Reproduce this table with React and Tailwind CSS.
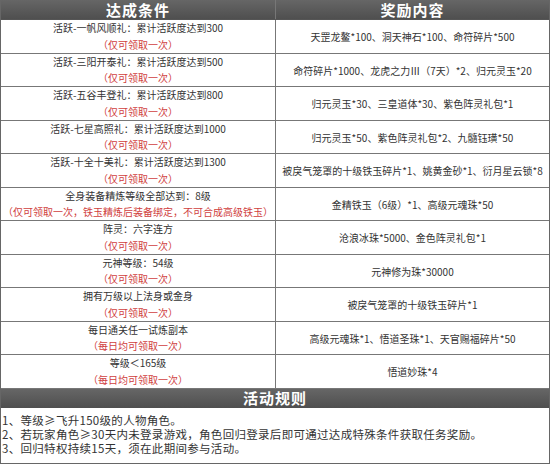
import React from 'react'

const rows = [
  { cond: '活跃-一帆风顺礼：累计活跃度达到300', note: '（仅可领取一次）', reward: '天罡龙鳌*100、洞天神石*100、命符碎片*500' },
  { cond: '活跃-三阳开泰礼：累计活跃度达到500', note: '（仅可领取一次）', reward: '命符碎片*1000、龙虎之力Ⅲ（7天）*2、归元灵玉*20' },
  { cond: '活跃-五谷丰登礼：累计活跃度达到800', note: '（仅可领取一次）', reward: '归元灵玉*30、三皇道体*30、紫色阵灵礼包*1' },
  { cond: '活跃-七星高照礼：累计活跃度达到1000', note: '（仅可领取一次）', reward: '归元灵玉*50、紫色阵灵礼包*2、九髓钰璜*50' },
  { cond: '活跃-十全十美礼：累计活跃度达到1300', note: '（仅可领取一次）', reward: '被戾气笼罩的十级铁玉碎片*1、姚黄金砂*1、衍月星云锁*8' },
  { cond: '全身装备精炼等级全部达到：8级', note: '（仅可领取一次，铁玉精炼后装备绑定，不可合成高级铁玉）', reward: '金精铁玉（6级）*1、高级元魂珠*50' },
  { cond: '阵灵：六字连方', note: '（仅可领取一次）', reward: '沧浪冰珠*5000、金色阵灵礼包*1' },
  { cond: '元神等级：54级', note: '（仅可领取一次）', reward: '元神修为珠*30000' },
  { cond: '拥有万级以上法身或金身', note: '（仅可领取一次）', reward: '被戾气笼罩的十级铁玉碎片*1' },
  { cond: '每日通关任一试炼副本', note: '（每日均可领取一次）', reward: '高级元魂珠*1、悟道圣珠*1、天官赐福碎片*50' },
  { cond: '等级＜165级', note: '（每日均可领取一次）', reward: '悟道妙珠*4' },
]

const font = { fontFamily: '"Microsoft YaHei", "Noto Sans CJK SC", sans-serif' }

export default function App() {
  return (
    <div className='w-[550px] h-[464px] bg-white text-[#333] border-x border-[#666] flex flex-col' style={font}>
      <div className='grid grid-cols-[275px_1fr] h-[20px] bg-gradient-to-b from-[#666] to-[#4f4f4f] border-b border-[#555] text-white font-bold text-[15px] leading-[16px]'>
        <div className='flex items-center justify-center border-r border-[#777] tracking-[1px]'>达成条件</div>
        <div className='flex items-center justify-center tracking-[1px]'>奖励内容</div>
      </div>

      {rows.map((r, i) => (
        <div key={i} className='grid grid-cols-[275px_1fr] h-[33.5px] border-b border-[#777] text-[10px]'>
          <div className='flex flex-col items-center justify-center leading-[16.5px] border-r border-[#777] whitespace-nowrap'>
            <span>{r.cond}</span>
            <span className='text-[#d04040]'>{r.note}</span>
          </div>
          <div className='flex items-center justify-center whitespace-nowrap'>{r.reward}</div>
        </div>
      ))}

      <div className='h-[19px] flex items-center justify-center bg-gradient-to-b from-[#666] to-[#4f4f4f] text-white font-bold text-[15px] leading-[16px] tracking-[1px]'>
        活动规则
      </div>
      <div className='flex-1 border-b border-[#666] pt-[5px] pl-[1px] text-[11.5px] leading-[14px] whitespace-nowrap tracking-[0.3px]'>
        <p>1、等级≥飞升150级的人物角色。</p>
        <p>2、若玩家角色≥30天内未登录游戏，角色回归登录后即可通过达成特殊条件获取任务奖励。</p>
        <p>3、回归特权持续15天，须在此期间参与活动。</p>
      </div>
    </div>
  )
}
